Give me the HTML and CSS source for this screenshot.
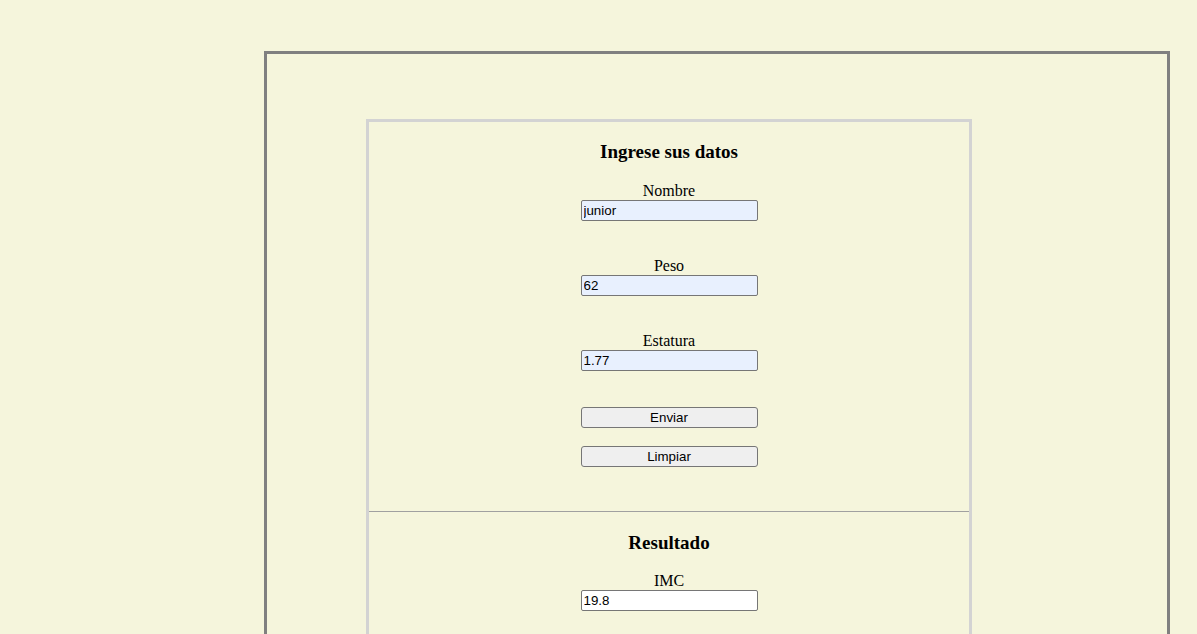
FILE: index.html
```html
<!DOCTYPE html>
<html lang="es">
<head>
<meta charset="utf-8">
<title>IMC</title>
<link rel="stylesheet" href="styles.css">
</head>
<body>
<div class="frame">
  <div class="card">
    <section class="block block-form">
      <h3 class="title">Ingrese sus datos</h3>
      <div class="field">
        <label class="label" for="nombre">Nombre</label>
        <input class="input filled" id="nombre" type="text" value="junior">
      </div>
      <div class="field">
        <label class="label" for="peso">Peso</label>
        <input class="input filled" id="peso" type="text" value="62">
      </div>
      <div class="field">
        <label class="label" for="estatura">Estatura</label>
        <input class="input filled" id="estatura" type="text" value="1.77">
      </div>
      <button class="btn btn-first" type="button">Enviar</button>
      <button class="btn btn-second" type="button">Limpiar</button>
    </section>
    <hr class="divider">
    <section class="block block-result">
      <h3 class="title title-result">Resultado</h3>
      <div class="field field-result">
        <label class="label" for="imc">IMC</label>
        <input class="input" id="imc" type="text" value="19.8">
      </div>
    </section>
  </div>
</div>
</body>
</html>
```
FILE: styles.css
```css
html, body {
  margin: 0;
  padding: 0;
}
body {
  background: #f5f5dc;
  font-family: "Liberation Serif", "Times New Roman", serif;
  color: #000;
  padding: 8px;
}
.frame {
  margin: 43px 0 0 256px;
  width: 900px;
  border: 3px solid #808080;
  padding-top: 65px;
  padding-bottom: 40px;
}
.card {
  margin-left: 99px;
  width: 600px;
  border: 3px solid #d3d3d3;
}
.block {
  display: flex;
  flex-direction: column;
  align-items: center;
}
.block-form {
  padding-bottom: 44px;
}
.block-result {
  padding-bottom: 60px;
}
.title {
  margin: 19px 0 0;
  font-size: 19px;
  line-height: 22px;
  font-weight: bold;
}
.title-result {
  margin-top: 20px;
}
.field {
  display: flex;
  flex-direction: column;
  align-items: center;
  margin-top: 36px;
}
.block-form .title + .field {
  margin-top: 19px;
}
.field-result {
  margin-top: 18px;
}
.label {
  font-size: 16px;
  line-height: 18px;
  height: 18px;
}
.input {
  box-sizing: border-box;
  width: 177px;
  height: 21px;
  margin: 0;
  padding: 1px 2px;
  border: 1px solid #767676;
  border-radius: 2px;
  background: #ffffff;
  font-family: "Liberation Sans", Arial, sans-serif;
  font-size: 13.33px;
  color: #000;
}
.input.filled {
  background: #e8f0fe;
}
.btn {
  box-sizing: border-box;
  width: 177px;
  height: 21px;
  margin: 0;
  padding: 0;
  border: 1px solid #767676;
  border-radius: 3px;
  background: #efefef;
  font-family: "Liberation Sans", Arial, sans-serif;
  font-size: 13.33px;
  color: #000;
}
.btn-first {
  margin-top: 36px;
}
.btn-second {
  margin-top: 18px;
}
.divider {
  margin: 0;
  border: 0;
  border-top: 1px solid #a0a0a0;
  height: 0;
}
```
